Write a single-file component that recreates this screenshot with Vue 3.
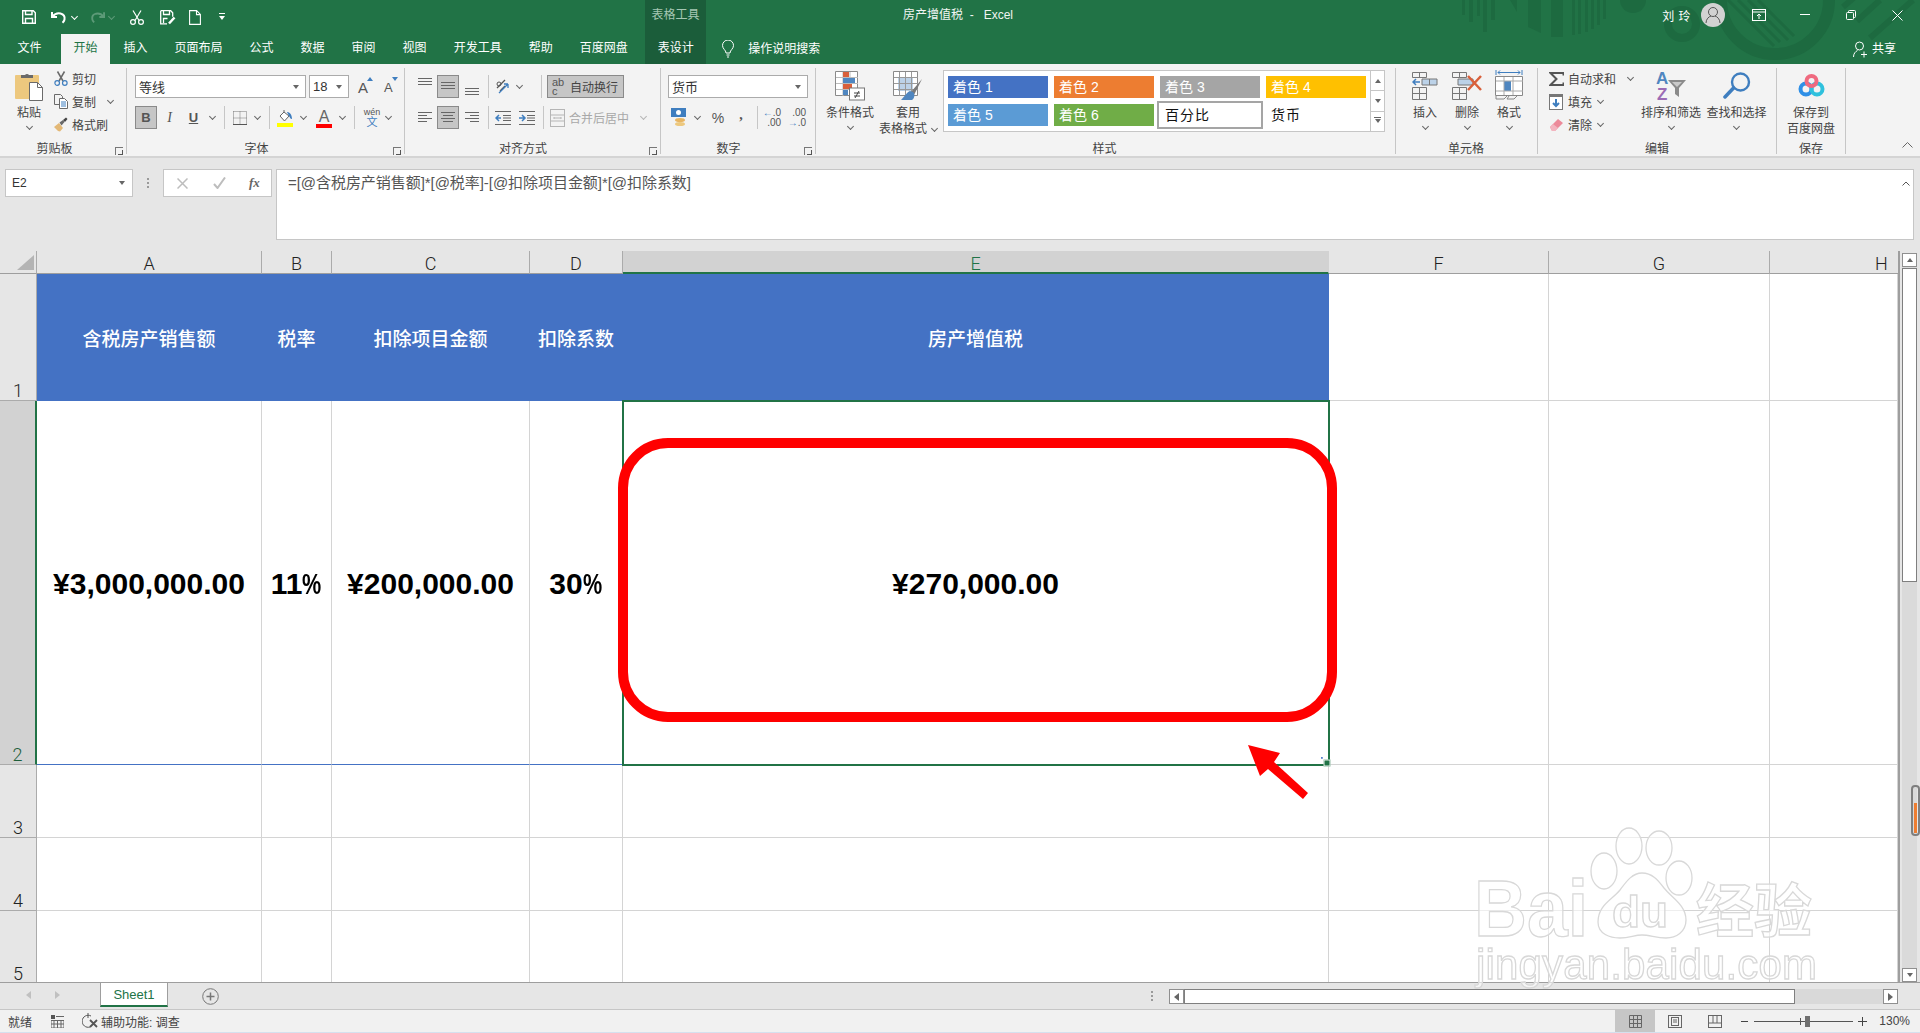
<template>
  <div class="app">
    <!-- title + tabs -->
    <header class="head">
      <svg class="art" width="480" height="64" viewBox="1440 0 480 64">
        <g fill="#1d6a40">
          <rect x="1462" y="0" width="3" height="15" /><rect x="1469" y="0" width="4" height="22" />
          <rect x="1477" y="0" width="3" height="16" /><rect x="1483" y="0" width="4" height="32" />
          <rect x="1491" y="0" width="4" height="20" />
          <path d="M1510 0h7v12zM1528 0h13v33l-13-6zM1551 0h12v37h-12z" />
          <rect x="1572" y="0" width="3" height="35" /><rect x="1578" y="0" width="3" height="34" />
          <rect x="1585" y="0" width="3" height="32" /><rect x="1591" y="0" width="3" height="29" />
          <rect x="1597" y="0" width="3" height="25" /><rect x="1603" y="0" width="3" height="19" />
          <circle cx="1633" cy="0" r="13" />
        </g>
        <g fill="none" stroke="#1d6a40">
          <circle cx="1682" cy="24" r="14" stroke-width="8" />
          <circle cx="1775" cy="0" r="54" stroke-width="12" />
          <path stroke-width="3" d="M1728 0l46 46M1738 0l42 42M1748 0l40 40M1758 0l36 36" />
          <path stroke-width="6" d="M1843 7l14-12M1857 21l23-21M1870 38l43-38" />
        </g>
      </svg>
      <div class="title-row">
        <div class="qat">
          <svg width="14" height="14" viewBox="0 0 14 14" fill="none" stroke="#fff" stroke-width="1.4"><path d="M.7.7h10.6l2 2v10.6H.7z" /><path d="M3.5 1v3.5h6.5V1M3.5 13V8.5h7V13" /></svg>
          <svg class="q-undo" width="17" height="14" viewBox="0 0 17 14" fill="none" stroke="#fff" stroke-width="2"><path d="M1 2v5h5" /><path d="M1.5 6.5C4 3.5 7 3 9.500 3.500c3 .7 4.500 3 4 6-.2 1.200-1 2.300-2 3.200" /></svg>
          <i class="chev w q-c1"></i>
          <svg class="q-redo" width="16" height="14" viewBox="0 0 17 14" fill="none" stroke="#5d9a78" stroke-width="2"><path d="M16 2v5h-5" /><path d="M15.500 6.500C13 3.500 10 3 7.500 3.500c-3 .7-4.500 3-4 6 .2 1.200 1 2.300 2 3.200" /></svg>
          <i class="chev dim q-c2"></i>
          <svg class="q-cut" width="14" height="15" viewBox="0 0 14 15" fill="none" stroke="#fff" stroke-width="1.2"><path d="M3 .5l6 10M11 .5L5 10.500" /><circle cx="3" cy="12" r="2.400" /><circle cx="11" cy="12" r="2.400" /></svg>
          <svg class="q-saveas" width="16" height="15" viewBox="0 0 16 15" fill="none" stroke="#fff" stroke-width="1.300"><path d="M.7.7h10l2 2v4M7 13.800H.7V.7" /><path d="M3.500 1v3.500h6V1M3.500 13V8.500h4" /><path d="M9 13.500l5.500-6" stroke-width="2.500" /></svg>
          <svg class="q-new" width="12" height="15" viewBox="0 0 12 15" fill="none" stroke="#fff" stroke-width="1.100"><path d="M.6.6h7l3.800 3.800v10H.6zM7.500.6v4h4" /></svg>
          <svg class="q-more" width="6" height="8" viewBox="0 0 6 8" fill="#fff"><rect x="0" y="0" width="6" height="1" /><path d="M0 3h6L3 7z" /></svg>
        </div>
        <div class="tools">表格工具</div>
        <div class="doc-title">房产增值税&nbsp; - &nbsp;&nbsp;Excel</div>
        <div class="win">
          <span class="user">刘 玲</span>
          <span class="avatar">
            <svg width="16" height="18" viewBox="0 0 16 18" fill="none" stroke="#555" stroke-width="1"><circle cx="8" cy="6" r="4.500" /><path d="M1 17c0-4 3-6.500 5-7M15 17c0-4-3-6.500-5-7" /></svg>
          </span>
          <span class="win-btn first"><svg width="14" height="12" viewBox="0 0 14 12" fill="none" stroke="#fff"><rect x=".5" y=".5" width="13" height="11" /><path d="M0 3h14M7 10V5M5 7l2-2 2 2" /></svg></span>
          <span class="win-btn"><svg width="10" height="2" viewBox="0 0 10 2"><rect width="10" height="1" fill="#fff" /></svg></span>
          <span class="win-btn"><svg width="10" height="10" viewBox="0 0 10 10" fill="none" stroke="#fff"><rect x=".5" y="2.500" width="7" height="7" rx="1" /><path d="M2.500 2.500v-1a1 1 0 0 1 1-1h5a1 1 0 0 1 1 1v5a1 1 0 0 1-1 1h-1" /></svg></span>
          <span class="win-btn"><svg width="11" height="11" viewBox="0 0 11 11" stroke="#fff"><path d="M.5.500l10 10M10.500.500l-10 10" /></svg></span>
        </div>
      </div>
      <nav class="tab-row">
        <span class="tab first">文件</span>
        <span v-for="t in tabs" :key="t" class="tab" :class="{ active: t === '开始' }">{{ t }}</span>
        <span class="tab design">表设计</span>
        <span class="tell">
          <svg width="12" height="18" viewBox="0 0 12 18" fill="none" stroke="#fff"><path d="M4 13c0-3-3.500-4-3.500-7.500a5.500 5.500 0 0 1 11 0C11.500 9 8 10 8 13zM4.500 15h3M5 17h2" /></svg>
          <span class="head-t">操作说明搜索</span>
        </span>
        <span class="share">
          <svg width="14" height="17" viewBox="0 0 14 17" fill="none" stroke="#fff"><circle cx="6.500" cy="5" r="4" /><path d="M.5 16c0-3.500 2-5.500 4-6.500M8.500 9.500M8 13.500h6M11 10.500v6" /></svg>
          <span class="head-t">共享</span>
        </span>
      </nav>
    </header>

    <!-- ribbon -->
    <section class="ribbon">
      <div class="grp g-clip">
        <div class="body row">
          <div class="big paste">
            <div class="ico">
              <svg width="28" height="30" viewBox="0 0 28 30"><rect x="0" y="4" width="24" height="24" rx="1" fill="#edc87e" /><path d="M6 7V4h4a2.500 2.500 0 0 1 4 0h4v3z" fill="#6a6a6a" /><path d="M14.500 11.500h8l5 5v13h-13z" fill="#fff" stroke="#6a6a6a" /><path d="M22.500 11.500v5h5" fill="none" stroke="#6a6a6a" /></svg>
            </div>
            <span>粘贴</span>
            <i class="chev"></i>
          </div>
          <div class="list">
            <div class="small">
              <svg width="14" height="15" viewBox="0 0 14 15" fill="none"><path d="M3.500.5l5.500 9.500M10.500.5L5 10" stroke="#6a6a6a" stroke-width="1.500" /><circle cx="3.200" cy="12" r="2.300" stroke="#3f7ebf" stroke-width="1.200" /><circle cx="10.800" cy="12" r="2.300" stroke="#3f7ebf" stroke-width="1.200" /></svg>
              剪切
            </div>
            <div class="small">
              <svg width="14" height="15" viewBox="0 0 14 15" fill="none"><path d="M.5.500h6l2 2v2M5 10.500H.5V.500" stroke="#6a6a6a" /><path d="M5.500 4.500h5l3 3v7h-8z" fill="#fff" stroke="#6a6a6a" /><path d="M7 8h5M7 10h5M7 12h5" stroke="#3f7ebf" /></svg>
              复制<i class="chev after9"></i>
            </div>
            <div class="small">
              <svg width="14" height="15" viewBox="0 0 14 15"><path d="M0 10l5-4 4 5-3 3.500-2-.5-1.500-1.500z" fill="#e3b876" /><path d="M5.500 5.500l3.500-2.500 1.500 2-3 3.500z" fill="#6a6a6a" /><path d="M9 3l3-2.500 1.500 1.500-2.500 3z" fill="#444" /></svg>
              格式刷
            </div>
          </div>
        </div>
        <div class="label">剪贴板<i class="launch"></i></div>
      </div>

      <div class="grp g-font">
        <div class="body rows">
          <div class="font-r1">
            <div class="input">等线<b class="tri"></b></div>
            <div class="input">18<b class="tri"></b></div>
            <span class="aa">A<svg width="6" height="4" viewBox="0 0 6 4"><path d="M0 4h6L3 0z" fill="#3f7ebf" /></svg></span>
            <span class="aa sm">A<svg width="6" height="4" viewBox="0 0 6 4"><path d="M0 0h6L3 4z" fill="#3f7ebf" /></svg></span>
          </div>
          <div class="font-r2">
            <span class="tog bold-b">B</span>
            <span class="ital">I</span>
            <span class="und">U</span>
            <i class="chev"></i>
            <i class="sep"></i>
            <svg width="14" height="14" viewBox="0 0 14 14" fill="none"><path d="M.5.500h13v13M.5.500v13M7 .500v13M.5 7h13" stroke="#777" stroke-dasharray="1 1" /><path d="M0 13.500h14" stroke="#555" /></svg>
            <i class="chev"></i>
            <i class="sep"></i>
            <svg width="16" height="18" viewBox="0 0 16 18"><path d="M7 1v2M3 7l4-4 5 4-4.500 5z" fill="#fff" stroke="#666" /><path d="M10 3c2.500 0 5 2.500 5 7-2 0-2-2-3-3z" fill="#3f7ebf" /><rect x="0" y="14" width="16" height="4" fill="#ffff00" /></svg>
            <i class="chev"></i>
            <span class="acolor">A<b></b></span>
            <i class="chev"></i>
            <i class="sep"></i>
            <span class="wen"><small>wén</small><em>文</em></span>
            <i class="chev"></i>
          </div>
        </div>
        <div class="label">字体<i class="launch"></i></div>
      </div>

      <div class="grp g-align">
        <div class="body rows">
          <div class="al-r1">
            <svg width="14" height="9" viewBox="0 0 14 9" stroke="#666"><path d="M0 .500h14M0 3.500h14M0 6.500h14" /></svg>
            <span class="tog"><svg width="14" height="9" viewBox="0 0 14 9" stroke="#666"><path d="M0 .500h14M0 3.500h14M0 6.500h14" /></svg></span>
            <svg class="al-bot" width="14" height="9" viewBox="0 0 14 9" stroke="#666"><path d="M0 .500h14M0 3.500h14M0 6.500h14" /></svg>
            <i class="sep"></i>
            <svg width="16" height="16" viewBox="0 0 16 16" fill="none" stroke="#555"><path d="M2 9l8-8M5 12l5-5" stroke-width="1.300" /><circle cx="4" cy="5" r="2" /><path d="M4 14l9-9M13 5v4M13 5H9" stroke="#3f7ebf" stroke-width="1.300" /></svg>
            <i class="chev"></i>
            <i class="sep sep-end"></i>
            <span class="tog wrap"><span class="abc">ab<br />c</span>自动换行</span>
          </div>
          <div class="al-r2">
            <svg width="14" height="11" viewBox="0 0 14 11" stroke="#666"><path d="M0 .500h14M0 3.500h9M0 6.500h14M0 9.500h9" /></svg>
            <span class="tog"><svg width="14" height="11" viewBox="0 0 14 11" stroke="#666"><path d="M0 .500h14M2 3.500h10M0 6.500h14M2 9.500h10" /></svg></span>
            <svg width="14" height="11" viewBox="0 0 14 11" stroke="#666"><path d="M0 .500h14M5 3.500h9M0 6.500h14M5 9.500h9" /></svg>
            <i class="sep"></i>
            <svg width="16" height="14" viewBox="0 0 16 14" fill="none"><path d="M0 .500h16M0 13.500h16M8 4.500h8M8 7h8M8 9.500h8" stroke="#666" /><path d="M6 7H1M4 4L1 7l3 3" stroke="#3f7ebf" stroke-width="1.500" /></svg>
            <svg width="16" height="14" viewBox="0 0 16 14" fill="none"><path d="M0 .500h16M0 13.500h16M8 4.500h8M8 7h8M8 9.500h8" stroke="#666" /><path d="M0 7h5M3 4l3 3-3 3" stroke="#3f7ebf" stroke-width="1.500" /></svg>
            <i class="sep"></i>
            <span class="merge">
              <svg width="15" height="18" viewBox="0 0 15 18" fill="none" stroke="#b5b5b5"><rect x=".5" y=".5" width="14" height="17" /><path d="M0 6h15M0 12h15M4 9h7M4 8v2M11 8v2" /></svg>
              合并后居中<i class="chev dimg"></i>
            </span>
          </div>
        </div>
        <div class="label">对齐方式<i class="launch"></i></div>
      </div>

      <div class="grp g-num">
        <div class="body rows">
          <div class="input num-sel">货币<b class="tri"></b></div>
          <div class="num-r2">
            <svg width="17" height="19" viewBox="0 0 17 19"><rect x="0" y="0" width="15" height="9" fill="#3f7ebf" /><circle cx="7.500" cy="4.500" r="2.500" fill="#fff" /><ellipse cx="9" cy="12" rx="5" ry="2" fill="#e8b562" /><ellipse cx="9" cy="16" rx="5" ry="2" fill="#edc87e" /></svg>
            <i class="chev"></i>
            <span class="pct">%</span>
            <span class="cma">,</span>
            <i class="sep"></i>
            <span class="dec"><em>←</em>.0<br />.00</span>
            <span class="dec">.00<br /><em>→</em>.0</span>
          </div>
        </div>
        <div class="label">数字<i class="launch"></i></div>
      </div>

      <div class="grp g-style">
        <div class="body row">
          <div class="big cond">
            <div class="ico">
              <svg width="30" height="30" viewBox="0 0 30 30"><path d="M.5.500h22v24H.5z" fill="#fff" stroke="#8a8a8a" /><path d="M8 1v24M15 1v24M1 6.500h22M1 12.500h22M1 18.500h22" stroke="#bbb" /><rect x="8" y="1" width="6" height="5" fill="#d9603b" /><rect x="8" y="7" width="12" height="5" fill="#4f86c0" /><rect x="8" y="13" width="9" height="5" fill="#d9603b" /><rect x="8" y="19" width="5" height="5" fill="#4f86c0" /><rect x="14.500" y="17" width="15" height="12" fill="#fff" stroke="#777" /><path d="M19 22h6M19 25h6M24 20l-4 7" stroke="#444" fill="none" /></svg>
            </div>
            <span>条件格式</span>
            <i class="chev"></i>
          </div>
          <div class="big tbl">
            <div class="ico">
              <svg width="30" height="30" viewBox="0 0 30 30"><path d="M.5.500h24v24H.5z" fill="#fff" stroke="#8a8a8a" /><rect x="5" y="6" width="15" height="14" fill="#bcd2e8" /><path d="M6.500 1v24M12.500 1v24M18.500 1v24M1 6.500h24M1 12.500h24M1 18.500h24" stroke="#999" /><path d="M29 8L18 21l3 3z" fill="#7a7a7a" /><path d="M17 20c-3 1-5 5-9 9h11c3-2 3-6 1-8z" fill="#4f86c0" /></svg>
            </div>
            <span>套用</span>
            <span class="tbl-l2">表格格式<i class="chev"></i></span>
          </div>
          <div class="gallery">
            <div class="g-cells">
              <span v-for="s in styles" :key="s.t" class="g-cell" :class="s.c">{{ s.t }}</span>
            </div>
            <div class="g-scroll">
              <span><b class="tri up"></b></span>
              <span><b class="tri"></b></span>
              <span class="more"><b class="tri"></b></span>
            </div>
          </div>
        </div>
        <div class="label">样式</div>
      </div>

      <div class="grp g-cells-grp">
        <div class="body row">
          <div class="big">
            <div class="ico">
              <svg width="26" height="28" viewBox="0 0 26 28" fill="none"><path d="M.5.500h14v5H.5zM7.500.500v5M.5 15.500h14v12H.5zM7.500 15.500v12M.5 21.500h14" stroke="#777" /><path d="M10 7h15v6H10z" fill="#bcd2e8" stroke="#777" /><path d="M17.500 7v6" stroke="#777" /><path d="M8 10H1M4 7l-3 3 3 3" stroke="#3f7ebf" stroke-width="1.500" /></svg>
            </div>
            <span>插入</span>
            <i class="chev"></i>
          </div>
          <div class="big">
            <div class="ico">
              <svg width="30" height="28" viewBox="0 0 30 28" fill="none"><path d="M.5.500h14v5H.5zM7.500.500v5M.5 15.500h14v12H.5zM7.500 15.500v12M.5 21.500h14" stroke="#777" /><path d="M6 7h15v6H6z" fill="#bcd2e8" stroke="#777" /><path d="M16 4l13 14M29 4L16 18" stroke="#d9603b" stroke-width="2.500" /></svg>
            </div>
            <span>删除</span>
            <i class="chev"></i>
          </div>
          <div class="big">
            <div class="ico">
              <svg width="28" height="32" viewBox="0 0 28 32" fill="none"><path d="M1 0v5M27 0v5M3 2.500h22M5 .500l-2 2 2 2M23 .500l2 2-2 2" stroke="#3f7ebf" /><path d="M.5 6.500h27v19H.5z" fill="#fff" stroke="#888" /><rect x="9" y="11" width="7" height="10" fill="#4f86c0" /><path d="M9 7v18M18 7v18M1 11h27M1 21h27" stroke="#aaa" /><path d="M1 26v3h8l3-3M14 26l-2 3h7l3-3" stroke="#888" /></svg>
            </div>
            <span>格式</span>
            <i class="chev"></i>
          </div>
        </div>
        <div class="label">单元格</div>
      </div>

      <div class="grp g-edit">
        <div class="body row">
          <div class="list edit-list">
            <div class="small">
              <svg class="sigma" width="15" height="14" viewBox="0 0 15 14" fill="none" stroke="#555" stroke-width="2"><path d="M14.500 3.500V1H1.500l6 6-6 6h13v-2.500" /></svg>
              自动求和<i class="chev after9"></i>
            </div>
            <div class="small">
              <svg class="sigma" width="15" height="16" viewBox="0 0 15 16"><rect x=".5" y=".5" width="13" height="15" fill="#fff" stroke="#777" /><rect x="0" y="0" width="14" height="3" fill="#777" /><path d="M7 5v7M4 9l3 3 3-3" stroke="#3f7ebf" stroke-width="2" fill="none" /></svg>
              填充<i class="chev after3"></i>
            </div>
            <div class="small">
              <svg class="sigma" width="15" height="14" viewBox="0 0 15 14"><path d="M1 9l8-8 5 4-8 8H3z" fill="#ec8a9a" /><path d="M1 9l3-3 5 4-3 3H3z" fill="#f3b4bf" /></svg>
              清除<i class="chev after3"></i>
            </div>
          </div>
          <div class="big sort">
            <div class="ico">
              <svg width="30" height="30" viewBox="0 0 30 30"><text x="0" y="13" class="sv-a">A</text><text x="1" y="29" class="sv-z">Z</text><path d="M12 9h18l-7 8v9l-4-3v-6z" fill="#8a8a8a" /><path d="M16 11h10l-5 5z" fill="#c9c9c9" /></svg>
            </div>
            <span>排序和筛选</span>
            <i class="chev"></i>
          </div>
          <div class="big find">
            <div class="ico">
              <svg width="28" height="30" viewBox="0 0 28 30" fill="none" stroke="#3f7ebf"><circle cx="17.500" cy="11" r="8.500" stroke-width="2.400" /><path d="M10.500 17L2 26" stroke-width="3.500" stroke-linecap="round" /></svg>
            </div>
            <span>查找和选择</span>
            <i class="chev"></i>
          </div>
        </div>
        <div class="label">编辑</div>
      </div>

      <div class="grp g-save">
        <div class="body row">
          <div class="big">
            <div class="ico">
              <svg width="27" height="24" viewBox="0 0 27 24" fill="none" stroke-width="4"><circle cx="8" cy="15" r="5.500" stroke="#2e8fe6" /><circle cx="19" cy="15" r="5.500" stroke="#2fc1dd" /><circle cx="13.500" cy="7" r="5" stroke="#ef6a7f" /></svg>
            </div>
            <span>保存到</span>
            <span>百度网盘</span>
          </div>
        </div>
        <div class="label">保存</div>
      </div>
      <svg class="collapse" width="11" height="6" viewBox="0 0 11 6" fill="none" stroke="#666"><path d="M.5 5.500l5-5 5 5" /></svg>
    </section>

    <!-- formula bar -->
    <section class="fbar">
      <div class="namebox">E2<b class="tri"></b></div>
      <span class="fdots"></span>
      <div class="fbtns">
        <svg width="11" height="11" viewBox="0 0 11 11" stroke="#bdbdbd" stroke-width="1.500"><path d="M.5.500l10 10M10.500.500l-10 10" /></svg>
        <svg width="13" height="12" viewBox="0 0 13 12" fill="none" stroke="#bdbdbd" stroke-width="2"><path d="M1 7l3.500 4L12 .5" /></svg>
        <span class="fx">fx</span>
      </div>
      <div class="finput">
        =[@含税房产销售额]*[@税率]-[@扣除项目金额]*[@扣除系数]
        <svg class="fcaret" width="8" height="5" viewBox="0 0 8 5" fill="none" stroke="#555"><path d="M.5 4.500L4 1l3.500 3.500" /></svg>
      </div>
    </section>

    <!-- sheet -->
    <section class="sheet-wrap">
      <div class="grid">
        <div class="corner"><svg width="17" height="15" viewBox="0 0 17 15"><path d="M17 0v15H0z" fill="#b4b4b4" /></svg></div>
        <div v-for="c in cols" :key="c" class="col-head" :class="{ on: c === 'E', cut: c === 'H' }">{{ c }}</div>
        <template v-for="row in rows" :key="row.num">
          <div class="row-head" :class="{ on: row.num === 2 }">{{ row.num }}</div>
          <div
            v-for="(val, i) in row.cells"
            :key="i"
            class="cell"
            :class="cellClass(row.num, i)"
          >
            <template v-if="val.endsWith('%')">{{ val.slice(0, -1) }}<span class="narrow">%</span></template>
            <template v-else>{{ val }}</template>
            <i v-if="row.num === 2 && i === 4" class="handle"></i>
          </div>
        </template>
      </div>
      <aside class="vscroll">
        <span class="v-btn"><b class="tri up"></b></span>
        <div class="v-track"><div class="v-thumb"></div></div>
        <span class="v-btn"><b class="tri"></b></span>
      </aside>
    </section>

    <!-- sheet tabs -->
    <section class="tabs-bar">
      <span class="nav"><b class="arr l"></b><b class="arr r"></b></span>
      <span class="sheet-tab">Sheet1</span>
      <span class="add-sheet">
        <svg width="17" height="17" viewBox="0 0 17 17" fill="none" stroke="#777"><circle cx="8.500" cy="8.500" r="7.800" /><path d="M4.500 8.500h8M8.500 4.500v8" stroke-width="1.500" /></svg>
      </span>
      <span class="hdots"></span>
      <div class="hscroll">
        <span class="h-btn"><b class="arr l dark"></b></span>
        <div class="h-track"><div class="h-thumb"></div></div>
        <span class="h-btn"><b class="arr r dark"></b></span>
      </div>
    </section>

    <!-- status -->
    <footer class="status">
      <span class="st-ready">就绪</span>
      <svg class="st-macro" width="13" height="13" viewBox="0 0 13 13"><rect x="0" y="0" width="4" height="4" fill="#555" /><path d="M5 1.500h8M0 5.500h13V13H0zM3 5.500V13M6.500 5.500V13M10 5.500V13M0 9h13" fill="none" stroke="#666" /></svg>
      <svg class="st-acc" width="16" height="16" viewBox="0 0 16 16" fill="none" stroke="#555"><path d="M6 0v5M9 3a6 6 0 1 0-1 11" /><path d="M8 7l7 7M15 7l-7 7" stroke-width="1.800" /></svg>
      <span class="st-acc-t">辅助功能: 调查</span>
      <div class="st-right">
        <span class="view on"><svg width="13" height="13" viewBox="0 0 13 13" fill="none" stroke="#666"><path d="M.5.500h12v12H.5zM4.500.500v12M8.500.500v12M.5 4.500h12M.5 8.500h12" /></svg></span>
        <span class="view"><svg width="14" height="13" viewBox="0 0 14 13" fill="none" stroke="#666"><rect x=".5" y=".5" width="13" height="12" /><rect x="3.500" y="2.500" width="7" height="8" /><path d="M5 5h4M5 7h4" /></svg></span>
        <span class="view"><svg width="14" height="13" viewBox="0 0 14 13" fill="none" stroke="#666"><rect x=".5" y=".5" width="13" height="12" /><path d="M.5 8h13M5 .5V8M9 .5V8" /></svg></span>
        <i class="z-minus"></i>
        <div class="slider"><i class="s-tick"></i><i class="s-thumb"></i></div>
        <svg class="z-plus" width="9" height="9" viewBox="0 0 9 9" stroke="#444"><path d="M0 4.500h9M4.500 0v9" /></svg>
        <span class="zoom">130%</span>
      </div>
    </footer>

    <!-- annotation overlays -->
    <div class="mark-box"></div>
    <svg class="mark-arrow" width="70" height="60" viewBox="1244 742 70 60"><path d="M1248 745l32 8-6 9 34 31-5 6-35-30-8 7z" fill="#f00" /></svg>
    <span class="pill"><i></i></span>
    <svg class="wm" width="360" height="180" viewBox="1465 825 360 180">
      <g fill="rgba(255,255,255,.6)" stroke="#d8d8d8" stroke-width="1.300">
        <ellipse cx="1629" cy="846" rx="13" ry="18" />
        <ellipse cx="1659" cy="848" rx="13" ry="17" />
        <ellipse cx="1604" cy="871" rx="13" ry="18" />
        <ellipse cx="1679" cy="878" rx="13" ry="17" />
        <path d="M1642 873C1632 873 1626 882 1620 890 1612 900 1598 905 1598 922 1598 934 1610 938 1620 938 1630 938 1634 935 1642 935 1650 935 1656 938 1666 938 1676 938 1686 932 1686 920 1686 905 1672 898 1664 888 1658 880 1652 873 1642 873Z" />
        <text x="1474" y="936" class="wm-big" textLength="114" lengthAdjust="spacingAndGlyphs">Bai</text>
        <text x="1612" y="927" class="wm-du" textLength="56" lengthAdjust="spacingAndGlyphs">du</text>
        <text x="1696" y="932" class="wm-cn" textLength="116">经验</text>
        <text x="1476" y="979" class="wm-url" textLength="341">jingyan.baidu.com</text>
      </g>
    </svg>
  </div>
</template>

<script setup>
const tabs = ['开始', '插入', '页面布局', '公式', '数据', '审阅', '视图', '开发工具', '帮助', '百度网盘']

const styles = [
  { t: '着色 1', c: 'a1' },
  { t: '着色 2', c: 'a2' },
  { t: '着色 3', c: 'a3' },
  { t: '着色 4', c: 'a4' },
  { t: '着色 5', c: 'a5' },
  { t: '着色 6', c: 'a6' },
  { t: '百分比', c: 'pc' },
  { t: '货币', c: 'cur' },
]

const cols = ['A', 'B', 'C', 'D', 'E', 'F', 'G', 'H']
const blank = ['', '', '', '', '', '', '', '']
const rows = [
  { num: 1, cells: ['含税房产销售额', '税率', '扣除项目金额', '扣除系数', '房产增值税', '', '', ''] },
  { num: 2, cells: ['¥3,000,000.00', '11%', '¥200,000.00', '30%', '¥270,000.00', '', '', ''] },
  { num: 3, cells: blank },
  { num: 4, cells: blank },
  { num: 5, cells: blank },
]

function cellClass(num, i) {
  return {
    th: num === 1 && i < 5,
    amount: num === 2,
    'tb-end': num === 2 && i < 4,
    sel: num === 2 && i === 4,
  }
}
</script>

<style>
html, body { margin: 0; background: #fff; }
</style>

<style scoped>
.app {
  position: relative; width: 1920px; height: 1033px; overflow: hidden;
  font: 12px "Liberation Sans", "Noto Sans CJK SC", sans-serif; color: #444;
  display: flex; flex-direction: column;
}
i, b, em { font-style: normal; font-weight: normal; }
svg { display: block; flex-shrink: 0; }

/* small bits */
.chev { display: block; width: 4px; height: 4px; border-right: 1px solid #666; border-bottom: 1px solid #666; transform: rotate(45deg); margin: -2px 3px 0; flex-shrink: 0; }
.chev.w { border-color: #fff; }
.chev.dim { border-color: #5d9a78; }
.chev.dimg { border-color: #b5b5b5; margin-left: 8px; }
.after9 { margin-left: 12px; }
.after3 { margin-left: 6px; }
.tri { display: block; width: 0; height: 0; border: 3.5px solid transparent; border-top: 4px solid #666; border-bottom: 0; }
.tri.up { border-top: 0; border-bottom: 4px solid #666; }
.sep { display: block; width: 1px; height: 23px; background: #c6c6c6; }

/* title */
.head { position: relative; height: 64px; background: #217346; color: #fff; flex-shrink: 0; }
.art { position: absolute; right: 0; top: 0; }
.title-row, .tab-row { position: relative; display: flex; }
.title-row { height: 34px; align-items: center; }
.qat { width: 645px; padding-left: 22px; box-sizing: border-box; display: flex; align-items: center; height: 34px; }
.q-undo { margin-left: 15px; }
.q-c1 { margin-left: 4px; }
.q-redo { margin-left: 9px; }
.q-c2 { margin-left: 4px; }
.q-cut { margin-left: 13px; }
.q-saveas { margin-left: 16px; }
.q-new { margin-left: 13px; }
.q-more { margin-left: 18px; }
.tools { width: 61px; height: 34px; background: #1b5d3a; color: #a6c7b4; line-height: 30px; text-align: center; }
.doc-title { margin-left: 197px; color: #f0f5f2; line-height: 30px; height: 34px; }
.win { margin-left: auto; display: flex; align-items: center; height: 30px; align-self: flex-start; }
.user { letter-spacing: .5px; }
.avatar { width: 24px; height: 24px; margin-left: 10px; border-radius: 50%; background: #d2d2d2; display: flex; align-items: center; justify-content: center; }
.win-btn { width: 46px; display: flex; justify-content: center; align-items: center; height: 30px; }
.win-btn.first { margin-left: 11px; }
.tab-row { height: 30px; align-items: stretch; }
.tab { padding: 0 13.5px; line-height: 29px; white-space: nowrap; }
.tab.first { margin-left: 4px; margin-right: 6px; }
.tab.active { background: #f3f3f3; color: #217346; padding: 0 12.5px; }
.tab.design { width: 61px; padding: 0; text-align: center; margin-left: 4px; background: #1b5d3a; }
.tell { margin-left: 16px; display: flex; align-items: center; gap: 14px; }
.share { margin-left: auto; padding-right: 24px; display: flex; align-items: center; gap: 5px; }
.head-t { margin-bottom: 4px; }

/* ribbon */
.ribbon { height: 94px; box-sizing: border-box; background: #f3f3f3; border-bottom: 2px solid #d4d4d4; display: flex; padding-top: 4px; flex-shrink: 0; }
.grp { box-sizing: border-box; height: 86px; border-right: 1px solid #c6c6c6; display: flex; flex-direction: column; }
.body { height: 73px; box-sizing: border-box; flex-shrink: 0; }
.body.row { display: flex; }
.body.rows { padding-top: 7px; display: flex; flex-direction: column; gap: 8px; }
.label { position: relative; text-align: center; line-height: 17px; flex-shrink: 0; }
.launch { position: absolute; right: 3px; bottom: 3px; width: 7px; height: 7px; border-left: 1px solid #777; border-top: 1px solid #777; }
.launch::after { content: ""; position: absolute; left: 2px; top: 2px; width: 4px; height: 4px; border-right: 1px solid #555; border-bottom: 1px solid #555; }
.big { display: flex; flex-direction: column; align-items: center; line-height: 16px; width: 42px; white-space: nowrap; }
.big .ico { height: 37px; display: flex; align-items: center; justify-content: center; padding-bottom: 2px; box-sizing: border-box; }
.big .chev { margin-top: 3px; }
.list { display: flex; flex-direction: column; margin-top: -1px; }
.small { height: 23px; display: flex; align-items: center; white-space: nowrap; }
.small svg { margin-right: 4px; }

.g-clip { width: 127px; padding-left: 5px; }
.g-clip .label { padding-right: 22px; }
.paste { width: 48px; }
.list { margin-left: 1px; }
.g-font { width: 278px; padding-left: 8px; }
.g-font .label { padding-right: 26px; }
.input { box-sizing: border-box; height: 23px; background: #fff; border: 1px solid #ababab; display: flex; align-items: center; justify-content: space-between; padding: 0 6px 0 3px; color: #333; font-size: 13px; }
.font-r1 { display: grid; grid-template-columns: 171px 40px 13px 13px; column-gap: 3px; height: 23px; }
.font-r1 .aa { font-size: 15px; display: flex; align-items: flex-end; height: 23px; margin-left: 6px; color: #555; line-height: 21px; }
.font-r1 .aa svg { margin-top: 2px; align-self: flex-start; margin-left: -1px; }
.font-r1 .aa.sm { font-size: 13px; margin-left: 16px; }
.font-r2 { display: grid; grid-template-columns: 22px 25px 23px 14px 10px 21px 14px 10px 22px 14px 28px 8px 16px 20px 12px; justify-items: center; align-items: center; height: 23px; }
.tog { box-sizing: border-box; height: 23px; background: #c6c6c6; border: 1px solid #8a8a8a; display: flex; align-items: center; justify-content: center; width: 22px; }
.bold-b { font: bold 13px "Liberation Sans", sans-serif; color: #555; }
.ital { font: italic 14px "Liberation Serif", serif; color: #555; }
.und { font: bold 13px "Liberation Sans", sans-serif; color: #555; text-decoration: underline; }
.acolor { position: relative; font-size: 16px; color: #666; width: 16px; height: 23px; line-height: 21px; text-align: center; }
.acolor b { position: absolute; left: 0; bottom: 1px; width: 16px; height: 4px; background: #f00; }
.wen { display: flex; flex-direction: column; align-items: center; line-height: 9px; font-size: 9px; color: #555; }
.wen small { font-size: 9px; }
.wen em { color: #3f7ebf; font-size: 11px; line-height: 11px; }

.g-align { width: 256px; padding-left: 8px; }
.g-align .label { padding-right: 27px; }
.al-r1, .al-r2 { display: grid; justify-items: center; align-items: center; height: 23px; }
.al-r1 { grid-template-columns: 24px 22px 26px 6px 24px 8px 24px 77px; }
.al-r2 { grid-template-columns: 24px 22px 26px 6px 24px 24px 8px auto; }
.al-r1 > svg:first-child { align-self: start; margin-top: 3px; }
.al-bot { align-self: end; margin-bottom: 1px; }
.sep-end { justify-self: end; margin-right: 5px; }
.tog.wrap { width: 77px; justify-content: flex-start; padding-left: 4px; gap: 4px; color: #444; }
.abc { width: 14px; font: 11px/9px "Liberation Sans", sans-serif; color: #555; }
.merge { display: flex; align-items: center; gap: 4px; color: #a8a8a8; white-space: nowrap; justify-self: start; margin-left: 3px; }

.g-num { width: 155px; padding-left: 7px; }
.g-num .label { padding-right: 26px; }
.num-sel { width: 140px; }
.num-r2 { display: grid; grid-template-columns: 22px 14px 28px 18px 14px 16px 34px; justify-items: center; align-items: center; height: 23px; }
.pct { font-size: 14px; color: #555; }
.cma { font: bold 14px "Liberation Serif", serif; color: #555; margin-top: -6px; }
.dec { font-size: 10px; line-height: 10px; text-align: right; color: #555; white-space: nowrap; }
.dec em { color: #3f7ebf; font-weight: bold; }

.g-style { width: 580px; padding-left: 10px; }
.g-style .label { padding-right: 12px; }
.cond { width: 48px; }
.tbl { width: 56px; margin-left: 6px; }
.tbl-l2 { display: flex; align-items: center; }
.tbl-l2 .chev { margin: -2px 0 0 5px; }
.gallery { box-sizing: border-box; width: 442px; height: 62px; margin: 2px 0 0 7px; background: #fff; border: 1px solid #c6c6c6; display: flex; }
.g-cells { display: grid; grid-template-columns: repeat(4, 100px); grid-auto-rows: 22px; column-gap: 6px; row-gap: 6px; padding: 5px 4px; width: 426px; box-sizing: border-box; }
.g-cell { font-size: 14px; line-height: 22px; padding-left: 5px; color: #fff; white-space: nowrap; }
.a1 { background: #4472c4; }
.a2 { background: #ed7d31; }
.a3 { background: #a5a5a5; }
.a4 { background: #ffc000; }
.a5 { background: #5b9bd5; }
.a6 { background: #70ad47; }
.pc { color: #111; outline: 2px solid #a5a5a5; outline-offset: 1px; letter-spacing: 1px; }
.cur { color: #111; letter-spacing: 1px; }
.g-scroll { width: 14px; border-left: 1px solid #c6c6c6; display: flex; flex-direction: column; background: #fff; }
.g-scroll span { flex: 1; display: flex; align-items: center; justify-content: center; border-bottom: 1px solid #c6c6c6; }
.g-scroll span:last-child { border-bottom: 0; }
.more { position: relative; }
.more::before { content: ""; position: absolute; left: 3px; right: 3px; top: 5px; height: 1px; background: #666; }

.g-cells-grp { width: 142px; padding-left: 8px; }
.g-cells-grp .label { padding-right: 9px; }
.g-edit { width: 239px; padding-left: 11px; }
.g-edit .label { padding-right: 11px; }
.edit-list { width: 92px; margin-left: 0; }
.sigma { width: 15px; }
.sort { width: 60px; }
.find { width: 61px; margin-left: 5px; }
.sv-a { font: bold 17px "Liberation Sans", sans-serif; fill: #4f86c0; }
.sv-z { font: bold 17px "Liberation Sans", sans-serif; fill: #9b6bb5; }
.g-save { width: 69px; }
.g-save .big { width: 68px; }
.collapse { margin: 74px 0 0 56px; }

/* formula bar */
.fbar { height: 93px; box-sizing: border-box; padding-top: 11px; background: #e6e6e6; display: flex; align-items: flex-start; flex-shrink: 0; }
.namebox { box-sizing: border-box; margin-left: 5px; width: 128px; height: 28px; background: #fff; border: 1px solid #c6c6c6; display: flex; align-items: center; justify-content: space-between; padding: 0 7px 0 6px; font-size: 12px; color: #333; }
.fdots { width: 2px; height: 10px; margin: 9px 14px 0 14px; border-left: 2px dotted #9a9a9a; box-sizing: border-box; }
.fbtns { box-sizing: border-box; width: 109px; height: 28px; background: #fff; border: 1px solid #c6c6c6; display: flex; align-items: center; padding-left: 13px; }
.fbtns svg + svg { margin-left: 25px; }
.fx { margin-left: 23px; font: italic bold 13px "Liberation Serif", serif; color: #666; }
.finput { position: relative; box-sizing: border-box; margin-left: 4px; width: 1638px; height: 71px; background: #fff; border: 1px solid #c6c6c6; padding-left: 11px; font-size: 15px; letter-spacing: -.05px; line-height: 25px; color: #555; white-space: nowrap; }
.fcaret { position: absolute; right: 3px; top: 11px; }

/* sheet */
.sheet-wrap { display: flex; height: 731px; flex-shrink: 0; }
.grid { width: 1898px; height: 731px; display: grid; grid-template-columns: 37px 225px 70px 198px 93px 706px 220px 221px 128px; grid-template-rows: 23px 127px 364px 73px 73px 73px; overflow: hidden; }
.corner { background: #e6e6e6; border-right: 1px solid #ababab; border-bottom: 1px solid #9e9e9e; box-sizing: border-box; display: flex; align-items: flex-end; padding: 0 0 3px 17px; }
.col-head { box-sizing: border-box; background: #e6e6e6; border-right: 1px solid #ababab; border-bottom: 1px solid #9e9e9e; text-align: center; font: 300 18px/26px Roboto, sans-serif; color: #222; }
.col-head.cut { text-align: left; padding-left: 105px; border-right: 0; }
.col-head.on { background: #d2d2d2; color: #217346; border-bottom: 2px solid #217346; border-right-color: #d2d2d2; }
.row-head { box-sizing: border-box; background: #e6e6e6; border-right: 1px solid #ababab; border-bottom: 1px solid #ababab; display: flex; align-items: flex-end; justify-content: center; font: 300 18px/18px Roboto, sans-serif; color: #222; }
.row-head.on { background: #d2d2d2; color: #1d5e3a; border-right: 2px solid #217346; }
.cell { position: relative; box-sizing: border-box; border-right: 1px solid #d4d4d4; border-bottom: 1px solid #d4d4d4; display: flex; align-items: center; justify-content: center; white-space: nowrap; }
.th { background: #4472c4; border-color: #4472c4; color: #fff; font-size: 19px; font-weight: 500; }
.amount { font-size: 30px; font-weight: bold; color: #000; padding-top: 3px; }
.narrow { display: inline-block; width: 20px; transform: scaleX(.72); transform-origin: left center; }
.tb-end { border-bottom-color: #4472c4; }
.sel { outline: 2px solid #217346; outline-offset: -1px; z-index: 1; }
.handle { position: absolute; right: -3px; bottom: -3px; width: 6px; height: 6px; background: #217346; border: 1px solid #fff; box-sizing: content-box; transform: scale(.85); }
.handle::before { content: ""; position: absolute; left: -4px; top: -4px; width: 2px; height: 2px; background: #4472c4; }
.vscroll { width: 22px; box-sizing: border-box; background: #e6e6e6; border-left: 2px solid #9e9e9e; padding: 2px 3px 0 2px; display: flex; flex-direction: column; }
.v-btn { box-sizing: border-box; height: 14px; background: #fff; border: 1px solid #8f8f8f; display: flex; align-items: center; justify-content: center; flex-shrink: 0; }
.v-track { flex: 1; background: #dadada; padding-top: 1px; }
.v-thumb { box-sizing: border-box; height: 314px; background: #fff; border: 1px solid #7f7f7f; }

/* sheet tabs */
.tabs-bar { box-sizing: border-box; height: 28px; background: #e6e6e6; border-top: 1px solid #9e9e9e; border-bottom: 1px solid #c6c6c6; display: flex; align-items: flex-start; flex-shrink: 0; }
.nav { width: 100px; box-sizing: border-box; padding: 8px 0 0 26px; display: flex; gap: 24px; }
.arr { display: block; width: 0; height: 0; border: 4px solid transparent; border-left-width: 0; border-right: 5px solid #c0c0c0; }
.arr.r { border-right-width: 0; border-left: 5px solid #c0c0c0; border-right-color: transparent; }
.arr.dark { border-right-color: #666; }
.arr.r.dark { border-left-color: #666; border-right-color: transparent; }
.sheet-tab { box-sizing: border-box; width: 68px; height: 24px; background: #fff; border-left: 1px solid #9e9e9e; border-right: 1px solid #9e9e9e; border-bottom: 2px solid #217346; text-align: center; color: #217346; font-size: 13px; line-height: 23px; }
.add-sheet { margin: 5px 0 0 34px; }
.hdots { margin: 8px 0 0 932px; width: 2px; height: 10px; border-left: 2px dotted #9a9a9a; box-sizing: border-box; }
.hscroll { margin: 6px 0 0 16px; width: 729px; height: 15px; display: flex; }
.h-btn { box-sizing: border-box; width: 15px; height: 15px; background: #fff; border: 1px solid #8f8f8f; display: flex; align-items: center; justify-content: center; flex-shrink: 0; }
.h-track { flex: 1; background: #d9d9d9; }
.h-thumb { box-sizing: border-box; width: 611px; height: 15px; background: #fff; border: 1px solid #7f7f7f; }

/* status */
.status { flex: 1; background: #f1f1f1; display: flex; align-items: center; border-bottom: 1px solid #d5e0ee; box-sizing: border-box; }
.st-ready { margin-left: 8px; }
.st-macro { margin-left: 19px; }
.st-acc { margin-left: 18px; }
.st-acc-t { margin-left: 3px; white-space: nowrap; }
.st-right { margin-left: auto; display: flex; align-items: center; height: 100%; padding-right: 10px; }
.view { width: 40px; height: 100%; display: flex; align-items: center; justify-content: center; }
.view.on { background: #c6c6c6; }
.z-minus { width: 7px; height: 1px; background: #444; margin-left: 6px; }
.slider { position: relative; width: 99px; height: 1px; background: #555; margin-left: 6px; }
.s-tick { position: absolute; left: 46px; top: -3px; width: 1px; height: 7px; background: #555; }
.s-thumb { position: absolute; left: 51px; top: -5px; width: 5px; height: 11px; background: #6f6f6f; }
.z-plus { margin-left: 5px; }
.zoom { margin-left: 12px; }

/* overlays */
.mark-box { position: absolute; left: 618px; top: 438px; width: 719px; height: 284px; box-sizing: border-box; border: 10px solid #f00; border-radius: 50px; z-index: 3; }
.mark-arrow { position: absolute; left: 1244px; top: 742px; z-index: 3; }
.pill { position: absolute; left: 1911px; top: 785px; width: 9px; height: 51px; box-sizing: border-box; border: 2px solid #7f7f7f; border-radius: 4px; padding: 16px 1px 1px; z-index: 3; }
.pill i { display: block; height: 100%; background: #ed7d31; }
.wm { position: absolute; left: 1465px; top: 825px; z-index: 4; filter: blur(.5px); }
.wm-big { font: bold 80px "Liberation Sans", sans-serif; }
.wm-du { font: bold 44px "Liberation Sans", sans-serif; }
.wm-cn { font: bold 58px "Noto Sans CJK SC", sans-serif; }
.wm-url { font: 42px "Liberation Sans", sans-serif; }
</style>
